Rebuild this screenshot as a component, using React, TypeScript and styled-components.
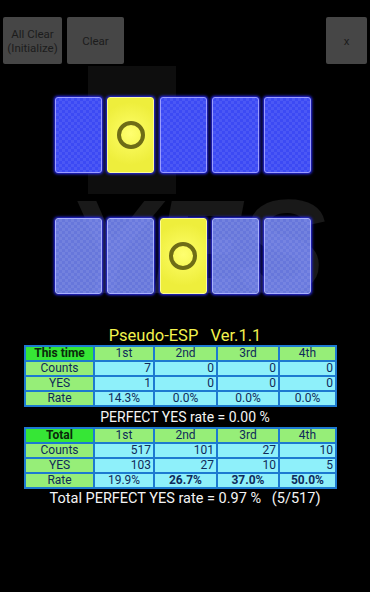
import React from "react";
import styled, { createGlobalStyle } from "styled-components";

const Global = createGlobalStyle`
  html, body { margin: 0; padding: 0; background: #000; }
  body { width: 370px; height: 592px; overflow: hidden; font-family: Roboto, "Liberation Sans", sans-serif; }
`;

const Screen = styled.div`
  position: relative;
  width: 370px;
  height: 592px;
  background: #000;
  overflow: hidden;
`;

const Watermark = styled.div`
  position: absolute;
  left: 0;
  top: 0;
  width: 370px;
  height: 320px;
  pointer-events: none;
`;

const WaterBar = styled.div`
  position: absolute;
  left: 88px;
  top: 66px;
  width: 88px;
  height: 128px;
  background: #0e0e0e;
`;

const WaterText = styled.div`
  position: absolute;
  left: 66px;
  top: 172px;
  font-family: "Liberation Sans", sans-serif;
  font-weight: bold;
  font-style: italic;
  font-size: 134px;
  line-height: 150px;
  letter-spacing: -4px;
  color: #191919;
`;

const Content = styled.div`
  position: relative;
  display: flex;
  flex-direction: column;
  padding-top: 17px;
`;

const Toolbar = styled.div`
  display: flex;
  gap: 5px;
  padding: 0 3px;
  height: 47px;
`;

const Spacer = styled.div`
  flex: 1;
`;

const ToolButton = styled.button<{ $w: number }>`
  width: ${(p) => p.$w}px;
  height: 47px;
  padding: 0;
  border: none;
  border-radius: 2px;
  background: #464646;
  color: #1c1c1c;
  font-family: Roboto, "Liberation Sans", sans-serif;
  font-size: 11.5px;
  line-height: 14px;
  text-align: center;
`;

const CardRow = styled.div<{ $mt: number }>`
  display: flex;
  gap: 5.25px;
  margin-top: ${(p) => p.$mt}px;
  padding-left: 55px;
`;

const Card = styled.div<{ $faded?: boolean }>`
  width: 47px;
  height: 76px;
  box-sizing: border-box;
  border-radius: 3px;
  border: 1px solid ${(p) => (p.$faded ? "#a8b0ff" : "#9a9cff")};
  box-shadow: 0 0 3px 1px #2a2cff;
  background-color: ${(p) => (p.$faded ? "rgba(120,138,255,0.86)" : "#3c4af4")};
  background-image:
    linear-gradient(45deg, rgba(255,255,255,0.08) 25%, transparent 25%, transparent 75%, rgba(255,255,255,0.08) 75%),
    linear-gradient(45deg, rgba(255,255,255,0.08) 25%, transparent 25%, transparent 75%, rgba(255,255,255,0.08) 75%);
  background-size: 6px 6px;
  background-position: 0 0, 3px 3px;
`;

const YesCard = styled.div`
  width: 47px;
  height: 76px;
  box-sizing: border-box;
  border-radius: 3px;
  border: 1px solid #fbfb9a;
  box-shadow: 0 0 3px 1px #2a2cff;
  background: radial-gradient(circle at 50% 48%, #ffff70 0%, #f6f652 35%, #eeee3c 70%);
  display: flex;
  align-items: center;
  justify-content: center;
`;

const Ring = () => (
  <svg width="32" height="32" viewBox="0 0 32 32">
    <circle cx="16" cy="16" r="12" fill="none" stroke="#6e6c16" strokeWidth="4" />
  </svg>
);

const Title = styled.div`
  margin-top: 33px;
  height: 18px;
  line-height: 18px;
  text-align: center;
  color: #f2f24e;
  font-size: 16.5px;
  white-space: pre;
`;

const Table = styled.div`
  margin-left: 24px;
  width: 313px;
  box-sizing: border-box;
  display: grid;
  grid-template-columns: 67px 58px 61px 60px 1fr;
  grid-auto-rows: 13px;
  gap: 2px;
  padding: 2px;
  background: #1d7ad0;
`;

type Kind = "corner" | "head" | "label" | "num" | "rate";

const Cell = styled.div<{ $kind: Kind; $bold?: boolean }>`
  font-size: 12px;
  line-height: 13px;
  padding: 0 2px;
  overflow: hidden;
  white-space: nowrap;
  color: ${(p) => (p.$kind === "corner" ? "#0a2a0a" : "#0f2a5a")};
  font-weight: ${(p) => (p.$kind === "corner" || p.$bold ? "bold" : "normal")};
  text-align: ${(p) => (p.$kind === "num" ? "right" : "center")};
  background: ${(p) =>
    p.$kind === "corner"
      ? "#36e636"
      : p.$kind === "head" || p.$kind === "label"
      ? "#96ee78"
      : "#8ef0fa"};
`;

const Summary = styled.div<{ $size: number }>`
  height: 20px;
  line-height: 20px;
  text-align: center;
  color: #f4f4f4;
  font-size: ${(p) => p.$size}px;
  white-space: pre;
`;

type RowData = { label: string; values: string[]; kind: Kind; bold?: boolean[] };

const StatTable = ({ corner, rows }: { corner: string; rows: RowData[] }) => (
  <Table>
    <Cell $kind="corner">{corner}</Cell>
    {["1st", "2nd", "3rd", "4th"].map((h) => (
      <Cell key={h} $kind="head">{h}</Cell>
    ))}
    {rows.map((r) => (
      <React.Fragment key={r.label}>
        <Cell $kind="label">{r.label}</Cell>
        {r.values.map((v, i) => (
          <Cell key={i} $kind={r.kind} $bold={r.bold?.[i]}>{v}</Cell>
        ))}
      </React.Fragment>
    ))}
  </Table>
);

export default function App() {
  return (
    <Screen>
      <Global />
      <Watermark>
        <WaterBar />
        <WaterText>YES</WaterText>
      </Watermark>
      <Content>
        <Toolbar>
          <ToolButton $w={59}>All Clear<br />(Initialize)</ToolButton>
          <ToolButton $w={57}>Clear</ToolButton>
          <Spacer />
          <ToolButton $w={41}>x</ToolButton>
        </Toolbar>
        <CardRow $mt={33}>
          <Card />
          <YesCard><Ring /></YesCard>
          <Card />
          <Card />
          <Card />
        </CardRow>
        <CardRow $mt={45}>
          <Card $faded />
          <Card $faded />
          <YesCard><Ring /></YesCard>
          <Card $faded />
          <Card $faded />
        </CardRow>
        <Title>{"Pseudo-ESP   Ver.1.1"}</Title>
        <StatTable
          corner="This time"
          rows={[
            { label: "Counts", values: ["7", "0", "0", "0"], kind: "num" },
            { label: "YES", values: ["1", "0", "0", "0"], kind: "num" },
            { label: "Rate", values: ["14.3%", "0.0%", "0.0%", "0.0%"], kind: "rate" },
          ]}
        />
        <Summary $size={14}>PERFECT YES rate = 0.00 %</Summary>
        <StatTable
          corner="Total"
          rows={[
            { label: "Counts", values: ["517", "101", "27", "10"], kind: "num" },
            { label: "YES", values: ["103", "27", "10", "5"], kind: "num" },
            {
              label: "Rate",
              values: ["19.9%", "26.7%", "37.0%", "50.0%"],
              kind: "rate",
              bold: [false, true, true, true],
            },
          ]}
        />
        <Summary $size={14.5}>{"Total PERFECT YES rate = 0.97 %   (5/517)"}</Summary>
      </Content>
    </Screen>
  );
}
